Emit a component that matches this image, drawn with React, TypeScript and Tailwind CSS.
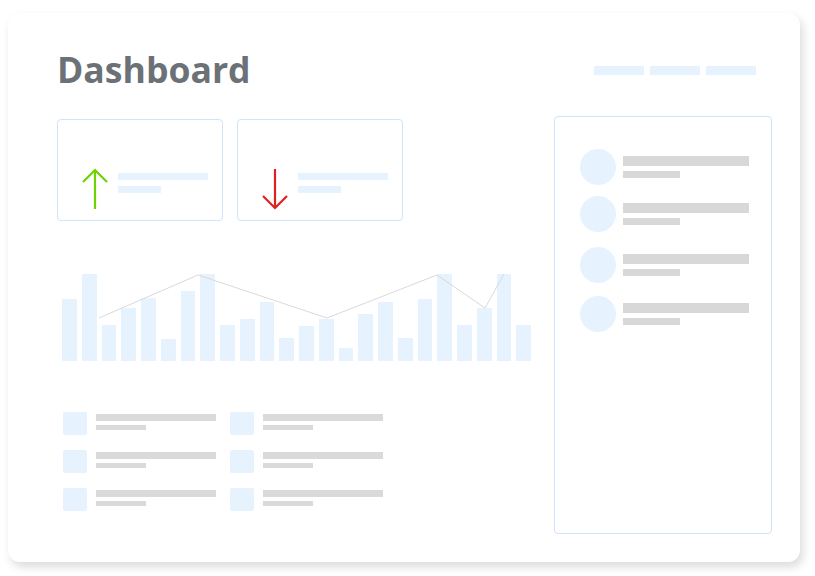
import React from "react";

// Bar heights of the background chart (px), left to right
const bars = [62, 87, 36, 53, 63, 22, 70, 87, 36, 42, 59, 23, 35, 42, 13, 47, 59, 23, 62, 87, 36, 53, 87, 36];

// Trend line points, relative to chart box (x from 62, y from 273)
const linePoints = "37,44 136,1 265,44 375,1 423,34 442,0";

const contacts = [
  { mt: "mt-0" },
  { mt: "mt-[11px]" },
  { mt: "mt-[15px]" },
  { mt: "mt-[13px]" },
];

function StatCard({ up }: { up: boolean }) {
  return (
    <div className="w-[166px] h-[102px] rounded-[4px] border border-[#cfe5fb] bg-white flex items-start pt-[48px] pl-[23px]">
      <svg width="28" height="42" viewBox="0 0 28 42" fill="none" className="shrink-0">
        {up ? (
          <path d="M14 41V2M2 14L14 2l12 12" stroke="#6dd400" strokeWidth="2.2" />
        ) : (
          <path d="M14 1v39M2 28l12 12 12-12" stroke="#e02020" strokeWidth="2.2" />
        )}
      </svg>
      <div className="ml-[9px] mt-[5px] flex flex-col gap-[6px]">
        <div className="w-[90px] h-[7px] bg-[#e6f2fd]" />
        <div className="w-[43px] h-[7px] bg-[#e6f2fd]" />
      </div>
    </div>
  );
}

function ListItem() {
  return (
    <div className="flex items-start">
      <div className="w-[24px] h-[23px] rounded-[2px] bg-[#e6f2fd] shrink-0" />
      <div className="ml-[9px] mt-[2px] flex flex-col gap-[4px]">
        <div className="w-[120px] h-[7px] bg-[#dadada]" />
        <div className="w-[50px] h-[5px] bg-[#dadada]" />
      </div>
    </div>
  );
}

export default function App() {
  return (
    <div className="w-[815px] h-[576px] bg-white overflow-hidden" style={{ fontFamily: '"Open Sans", sans-serif' }}>
      <div className="ml-[8px] mt-[13px] w-[792px] h-[549px] rounded-[12px] bg-white shadow-[3px_5px_10px_rgba(0,0,0,0.14)] flex flex-col">
        {/* Header */}
        <div className="flex items-start justify-between pt-[34px] pl-[49px] pr-[44px]">
          <h1 className="text-[35.6px] leading-[44px] font-bold text-[#6c7177]">Dashboard</h1>
          <div className="flex gap-[6px] mt-[19px]">
            <div className="w-[50px] h-[9px] bg-[#e6f2fd]" />
            <div className="w-[50px] h-[9px] bg-[#e6f2fd]" />
            <div className="w-[50px] h-[9px] bg-[#e6f2fd]" />
          </div>
        </div>

        {/* Body */}
        <div className="flex mt-[25px]">
          {/* Left column */}
          <div className="ml-[49px] w-[475px] pt-[3px] flex flex-col">
            <div className="flex gap-[14px]">
              <StatCard up />
              <StatCard up={false} />
            </div>

            {/* Chart */}
            <div className="relative ml-[5px] mt-[53px] w-[469px] h-[87px] flex items-end gap-[5px]">
              {bars.map((h, i) => (
                <div key={i} className="flex-1 bg-[#e6f2fd]" style={{ height: h }} />
              ))}
              <svg className="absolute left-0 top-0" width="469" height="87" viewBox="0 0 469 87" fill="none">
                <polyline points={linePoints} stroke="#d9d9d9" strokeWidth="1" />
              </svg>
            </div>

            {/* List */}
            <div className="ml-[6px] mt-[51px] grid grid-cols-[167px_167px] gap-y-[15px]">
              {Array.from({ length: 6 }).map((_, i) => (
                <ListItem key={i} />
              ))}
            </div>
          </div>

          {/* Right panel */}
          <div className="ml-auto mr-[28px] w-[218px] h-[418px] rounded-[4px] border border-[#cfe5fb] pt-[32px] pl-[25px]">
            {contacts.map((c, i) => (
              <div key={i} className={`flex items-start ${c.mt}`}>
                <div className="w-[36px] h-[36px] rounded-full bg-[#e6f2fd] shrink-0" />
                <div className="ml-[7px] mt-[7px] flex flex-col gap-[5px]">
                  <div className="w-[126px] h-[10px] bg-[#d8d8d8]" />
                  <div className="w-[57px] h-[7px] bg-[#d8d8d8]" />
                </div>
              </div>
            ))}
          </div>
        </div>
      </div>
    </div>
  );
}
